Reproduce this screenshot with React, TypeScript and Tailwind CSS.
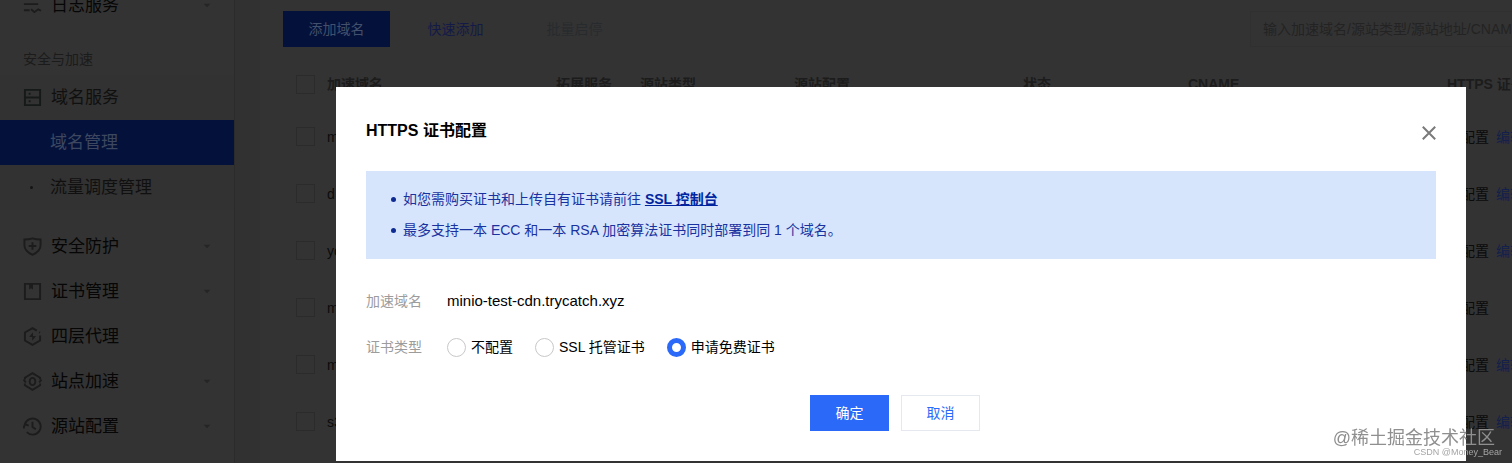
import { useState, type ReactNode } from 'react'

const MENU_ICON = 'h-[19px] w-[19px] shrink-0'

function Icon({ children }: { children: ReactNode }) {
  return (
    <svg viewBox="0 0 20 20" className={MENU_ICON} fill="none" stroke="currentColor" strokeWidth="2" aria-hidden="true">
      {children}
    </svg>
  )
}

const ICONS = {
  log: (
    <Icon>
      <path d="M1 2h17M1 8.500h15M1 15h6M8.500 14l3.500 3 4-3 3 1.500" />
    </Icon>
  ),
  domain: (
    <Icon>
      <path d="M2 2h16v16H2zM2 10h16M6 6h2M6 14h2" />
    </Icon>
  ),
  shield: (
    <Icon>
      <path d="M10 1.500c3 1 5.500 1.200 8.500 1.200v6c0 4.500-4 8-8.500 10-4.500-2-8.500-5.500-8.500-10v-6c3 0 5.500-.200 8.500-1.200z" />
      <path d="M10 5.500v8M6 9.500h8" />
    </Icon>
  ),
  cert: (
    <Icon>
      <path d="M2 2h16v16H2z" />
      <path d="M6.500 2h4v6l-2-1.500-2 1.500z" fill="currentColor" stroke="none" />
    </Icon>
  ),
  proxy: (
    <Icon>
      <path d="M14.500 3.800L10 1.200 2 5.800v8.400l8 4.600 8-4.600V9M17 5.500l1 .500" />
      <path d="M10.500 5.500l-4 5h3.200v4l4-5h-3.200z" fill="currentColor" stroke="none" />
    </Icon>
  ),
  site: (
    <Icon>
      <path d="M2 12v2l8 4.800 8-4.800v-2M2 8V6l8-4.800L18 6v2" />
      <ellipse cx="10" cy="10" rx="3" ry="3.800" />
      <path d="M.500 8l2.500 3M19.500 8L17 11" />
    </Icon>
  ),
  origin: (
    <Icon>
      <path d="M2 7.500A8.500 8.500 0 1 1 4 16M.500 12l1.500-4.500 4 1.500M10 5v5.500l3.500 2.500" />
    </Icon>
  ),
}

interface MenuItem {
  label: string
  icon: ReactNode
  expandable?: boolean
}

const SERVICE_MENU: MenuItem[] = [
  { label: '安全防护', icon: ICONS.shield, expandable: true },
  { label: '证书管理', icon: ICONS.cert, expandable: true },
  { label: '四层代理', icon: ICONS.proxy },
  { label: '站点加速', icon: ICONS.site, expandable: true },
  { label: '源站配置', icon: ICONS.origin, expandable: true },
]

const DOMAINS = [
  { name: 'm', editable: true },
  { name: 'd', editable: true },
  { name: 'yo', editable: true },
  { name: 'm', editable: false },
  { name: 'm', editable: true },
  { name: 's3', editable: true },
]

const CERT_TYPES = ['不配置', 'SSL 托管证书', '申请免费证书']

function MenuLink({ label, icon, expandable }: MenuItem) {
  return (
    <a href="#" className="flex h-[45px] items-center pl-[23px] pr-[23px] text-[#1c1c1c]">
      {icon}
      <span className="ml-[9px] flex-1 text-[17px] leading-6 text-[#060606]">{label}</span>
      {expandable && (
        <svg viewBox="0 0 8 6" className="h-[5px] w-2 text-[#252525]" fill="currentColor" aria-hidden="true">
          <path d="M0 1h8L4 5z" />
        </svg>
      )}
    </a>
  )
}

function Sidebar() {
  return (
    <nav className="-mt-[17px] w-[235px] shrink-0 border-r border-[#2b2b2b] bg-[#333]">
      <MenuLink label="日志服务" icon={ICONS.log} expandable />
      <h2 className="mt-[15px] h-8 pl-[23px] text-sm leading-8 text-[#1b1b1b]">安全与加速</h2>
      <div className="mb-[14px] bg-[#323232]">
        <a href="#" className="flex h-[45px] items-center pl-[23px] text-[#151a18]">
          {ICONS.domain}
          <span className="ml-[9px] text-[17px] text-[#101010]">域名服务</span>
        </a>
        <a href="#" className="flex h-[45px] items-center bg-[#04123b] pl-[50px] text-[17px] text-[#3d4860]">
          域名管理
        </a>
        <a href="#" className="flex h-[45px] items-center pl-[30px] text-[17px] text-[#101010]">
          <span className="mr-[17px] h-[3px] w-[3px] rounded-full bg-[#151515]" />
          流量调度管理
        </a>
      </div>
      {SERVICE_MENU.map((item) => (
        <MenuLink key={item.label} {...item} />
      ))}
    </nav>
  )
}

function Checkbox({ label }: { label: string }) {
  return (
    <input
      type="checkbox"
      aria-label={label}
      className="block h-[19px] w-[19px] appearance-none border border-[#2b2b2b]"
    />
  )
}

function DomainTable() {
  return (
    <table className="mt-[13px] w-[1340px] table-fixed text-left text-sm">
      <thead>
        <tr className="h-[48px] text-[#1c1c1c]">
          <th className="w-11 pl-[13px]"><Checkbox label="全选" /></th>
          <th className="w-[229px]">加速域名</th>
          <th className="w-[84px]">拓展服务</th>
          <th className="w-[154px]">源站类型</th>
          <th className="w-[229px]">源站配置</th>
          <th className="w-[165px]">状态</th>
          <th className="w-[259px]">CNAME</th>
          <th>HTTPS 证书配置</th>
        </tr>
      </thead>
      <tbody>
        {DOMAINS.map((domain, i) => (
          <tr key={i} className="h-[57px] text-[#0b0b0b]">
            <td className="pl-[13px]"><Checkbox label={domain.name} /></td>
            <td>{domain.name}</td>
            <td colSpan={5} />
            <td>
              已配置
              {domain.editable && <a href="#" className="ml-[7px] text-[#131f4c]">编辑</a>}
            </td>
          </tr>
        ))}
      </tbody>
    </table>
  )
}

function DomainPage() {
  return (
    <main className="min-w-0 flex-1 overflow-hidden bg-[#313131] pl-[25px]">
      <div className="min-h-full bg-[#333] pl-[23px] pt-[11px]">
        <div className="flex h-9 text-sm">
          <button type="button" className="w-[107px] bg-[#04123b] text-[#43506b]">添加域名</button>
          <button type="button" className="ml-3 w-[107px] text-[#141a48]">快速添加</button>
          <button type="button" disabled className="ml-3 w-[107px] text-[#282b2e]">批量启停</button>
          <input
            type="text"
            aria-label="搜索域名"
            placeholder="输入加速域名/源站类型/源站地址/CNAME"
            className="-mr-10 ml-auto w-[302px] border border-[#303030] pl-3 placeholder:text-[#232323]"
          />
        </div>
        <DomainTable />
      </div>
    </main>
  )
}

function NoticeItem({ children }: { children: ReactNode }) {
  return (
    <li className="flex items-center gap-[7px]">
      <span className="h-[5px] w-[5px] shrink-0 rounded-full bg-[#0d2b93]" />
      <p>{children}</p>
    </li>
  )
}

function CertDialog() {
  const [certType, setCertType] = useState('申请免费证书')

  return (
    <div className="fixed inset-0 pl-[336px] pr-[46px] pt-[87px]">
      <form
        role="dialog"
        aria-labelledby="cert-title"
        className="bg-white px-[30px] pb-[30px] pt-8 text-sm text-black"
        onSubmit={(e) => e.preventDefault()}
      >
        <div className="flex h-6 items-center justify-between">
          <h1 id="cert-title" className="text-base font-bold leading-6">HTTPS 证书配置</h1>
          <button type="button" aria-label="关闭" className="pt-1 text-[#7a7a7a]">
            <svg viewBox="0 0 14 14" className="h-[14px] w-[14px]" fill="none" stroke="currentColor" strokeWidth="2" aria-hidden="true">
              <path d="M.800.800l12.400 12.400M13.200.800L.800 13.200" />
            </svg>
          </button>
        </div>

        <ul className="mt-7 bg-[#d6e5fc] py-[13px] pl-[25px] leading-[31px] text-[#1a32a0]">
          <NoticeItem>
            如您需购买证书和上传自有证书请前往 <a href="#" className="font-bold text-[#00249e] underline">SSL 控制台</a>
          </NoticeItem>
          <NoticeItem>最多支持一本 ECC 和一本 RSA 加密算法证书同时部署到同 1 个域名。</NoticeItem>
        </ul>

        <dl className="mt-[30px] flex h-6 items-center">
          <dt className="w-[81px] text-[#9c9c9c]">加速域名</dt>
          <dd className="text-[15px]">minio-test-cdn.trycatch.xyz</dd>
        </dl>

        <fieldset className="mt-[22px] flex h-6 items-center" aria-labelledby="cert-type">
          <span id="cert-type" className="w-[81px] text-[#9c9c9c]">证书类型</span>
          <div className="flex gap-[22px]">
            {CERT_TYPES.map((type) => (
              <label key={type} className="flex items-center gap-[5px]">
                <input
                  type="radio"
                  name="certType"
                  checked={certType === type}
                  onChange={() => setCertType(type)}
                  className="h-[19px] w-[19px] appearance-none rounded-full border border-[#c8c8c8] bg-white checked:border-[5px] checked:border-[#2b69f8]"
                />
                {type}
              </label>
            ))}
          </div>
        </fieldset>

        <div className="mt-9 flex justify-center gap-3 pr-3">
          <button type="submit" className="h-9 w-[79px] bg-[#2b69f8] text-white">确定</button>
          <button type="button" className="h-9 w-[79px] border border-[#e5e8ee] text-[#2b69f8]">取消</button>
        </div>
      </form>
    </div>
  )
}

export default function App() {
  return (
    <div className="relative flex h-screen overflow-hidden bg-[#333] font-['Liberation_Sans','Noto_Sans_CJK_SC',sans-serif]">
      <Sidebar />
      <DomainPage />
      <CertDialog />
      <div className="pointer-events-none fixed bottom-[13px] right-[17px] text-[18px] leading-6 text-[#8f8f8f]">
        @稀土掘金技术社区
      </div>
      <div className="pointer-events-none fixed bottom-1 right-[10px] text-[9px] leading-[14px] text-[#a5a5a5]">
        CSDN @Money_Bear
      </div>
    </div>
  )
}
